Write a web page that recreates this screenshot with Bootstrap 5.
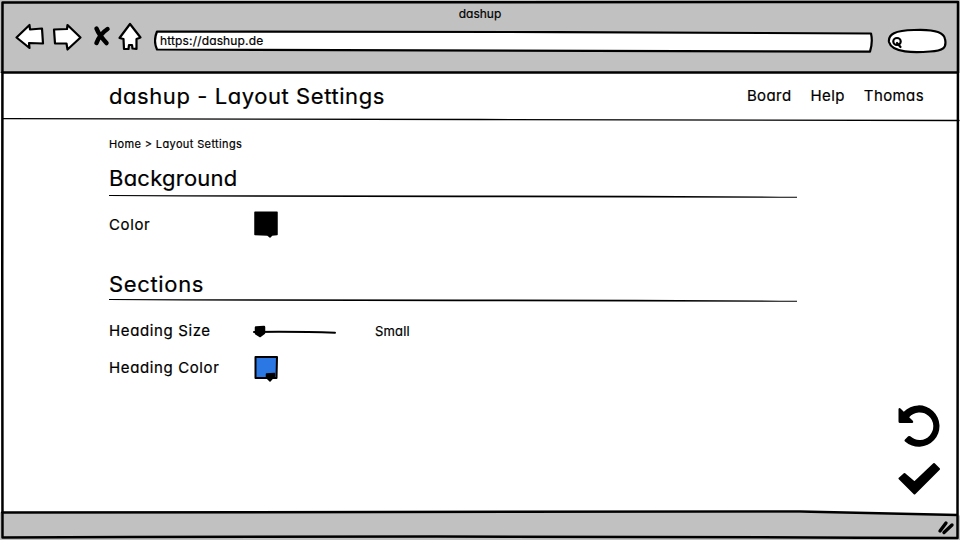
<!DOCTYPE html>
<html lang="en">
<head>
<meta charset="utf-8">
<meta name="viewport" content="width=device-width, initial-scale=1">
<title>dashup</title>
<link href="https://cdn.jsdelivr.net/npm/bootstrap@5.3.0/dist/css/bootstrap.min.css" rel="stylesheet">
<style>
body{font-family:Inter,"Open Sans",sans-serif;font-feature-settings:"cv11","ss03";color:#000;font-size:15px;line-height:1;-webkit-text-stroke:.2px #000}
svg{display:block;fill:none;stroke:#000;stroke-linecap:round;stroke-linejoin:round;flex:none}
.browser{width:960px;height:540px}
.chrome{height:73px;background:#c1c1c1}
.win-title{height:28px;font-size:12px;letter-spacing:0}
.tools{height:45px}
.address{width:720px;height:24px;margin-left:11px}
.address span{left:6px;top:7px;font-size:12px;letter-spacing:.15px}
.search{margin-left:12px}
.site-nav{height:45px;padding-left:109px;padding-right:36px}
.site-nav h1{font-size:22px;font-weight:400;letter-spacing:.57px;padding-top:2px}
.site-nav a{font-size:15px;letter-spacing:.4px;color:#000}
.menu{gap:19px;padding-bottom:1px}
.settings{width:688px;margin-left:109px}
.crumbs{height:44px;font-size:11px;letter-spacing:.37px}
.settings h2{font-size:22px;height:24px;font-weight:400;letter-spacing:.25px}
.settings h2.spaced{margin-top:29px;letter-spacing:.65px}
.field{height:37px}
.field label{width:143px;letter-spacing:.62px}
.value{margin-left:37px;padding-top:2px;font-size:13px;letter-spacing:.15px}
.actions{padding-right:20px;padding-bottom:17px;gap:13px}
.status{height:27px;background:#c1c1c1}
</style>
</head>
<body class="overflow-hidden">
<div class="browser position-relative d-flex flex-column bg-white">
  <header class="chrome">
    <div class="win-title d-flex align-items-center justify-content-center">dashup</div>
    <div class="tools d-flex">
      <svg width="143" height="36" viewBox="0 28 143 36" stroke-width="2.200" overflow="visible">
        <path fill="#fff" d="M16.5 37.5 29.5 25 30 29.500 42 28.500 43 43.500 29 43 29.500 48Z"/>
        <path fill="#fff" d="M54 29.500 67 29 67.500 25 80.500 37.500 67.500 49.500 66.500 43.500 55 43.500Z"/>
        <path d="M96.500 28.500Q99 35 106.500 43M107.500 29Q100 34 96.500 43" stroke-width="4.500"/>
        <path fill="#fff" d="M130 24 140.500 37.500 136.500 39 136.500 49 132.500 48.500 132 45 129 45 128.500 49 124 49 123.500 39 119.500 38Z"/>
      </svg>
      <div class="address position-relative">
        <svg width="720" height="30" viewBox="154 28 720 30" stroke-width="2.200"><path fill="#fff" d="M157 31.500 C350 31.500 650 32 871 33.500 Q873 42 870 51.700 Q500 50.500 157 49.500 Q153 41 157 31.500Z"/></svg>
        <span class="position-absolute">https://dashup.de</span>
      </div>
      <svg class="search" width="62" height="30" viewBox="886 28 62 30" stroke-width="2.200">
        <path fill="#fff" d="M889 42 C888 34 895 30.500 914 30 C935 29 944 32 945 39 C947 48 943 51 930 51.500 C915 53 892 53 889 42Z"/>
        <ellipse cx="897" cy="41.500" rx="3.700" ry="3.500"/><path d="M897 43 900.500 47"/>
      </svg>
    </div>
  </header>
  <nav class="site-nav navbar py-0 d-flex flex-nowrap justify-content-between">
    <h1 class="mb-0">dashup - Layout Settings</h1>
    <div class="d-flex menu">
      <a class="text-decoration-none" href="#">Board</a>
      <a class="text-decoration-none" href="#">Help</a>
      <a class="text-decoration-none" href="#">Thomas</a>
    </div>
  </nav>
  <svg width="960" height="4" viewBox="0 118 960 4" stroke-width="1.300"><path d="M3 118.700 Q300 120 480 119.500 T959 120.500"/></svg>
  <main class="d-flex flex-grow-1 justify-content-between">
    <div class="settings">
      <div class="crumbs d-flex align-items-center">Home &gt; Layout Settings</div>
      <h2 class="mb-0 d-flex align-items-center">Background</h2>
      <svg width="688" height="16" viewBox="0 190 688 16"><path fill="#000" stroke="none" d="M0 195 Q180 195.400 350 195.400 T688 196.800L688 197.800Q520 197.500 350 197.300T0 196Z"/></svg>
      <div class="field d-flex align-items-center">
        <label>Color</label>
        <svg width="28" height="30" viewBox="0 1 28 30"><path fill="#000" stroke-width="1.500" d="M3 3.300H25V25.500L20 26 18 28 15.500 26 3 25.500Z"/></svg>
      </div>
      <h2 class="mb-0 spaced d-flex align-items-center">Sections</h2>
      <svg width="688" height="16" viewBox="0 190 688 16"><path fill="#000" stroke="none" d="M0 193 Q180 193.400 350 193.400 T688 194.800L688 195.800Q520 195.500 350 195.300T0 194Z"/></svg>
      <div class="field d-flex align-items-center">
        <label>Heading Size</label>
        <svg width="86" height="16" viewBox="252 323 86 16" stroke-width="2"><path d="M254 332 Q300 331.500 335 332.800"/><path fill="#000" d="M256 327.500 264 327V333L260 336 256 333.500Z" stroke-width="2.500"/></svg>
        <span class="value">Small</span>
      </div>
      <div class="field d-flex align-items-center">
        <label>Heading Color</label>
        <svg width="28" height="30" viewBox="0 0 28 30" stroke-width="2"><path fill="#2b78e4" d="M3.500 4 25 4 24.500 25 3.500 25Z"/><path fill="#000" d="M14.500 21 22.500 20.500V23L18 28 14.500 24.500Z" stroke-width="1.500"/></svg>
      </div>
    </div>
    <div class="actions d-flex flex-column justify-content-end">
      <svg width="43" height="44" viewBox="897 405 43 44"><path stroke="none" fill="#000" d="M898.500 409Q899 407.500 900.500 408.500L903.800 411.800A20.700 20.700 0 1 1 905 441.500Q904 440.600 905 439.600L908.200 436.300Q909.200 435.500 910.300 436.300A13.700 13.700 0 1 0 909.200 417.300L912.800 420.800Q914 422.800 912 423H900Q898.500 423 898.500 421.500Z"/></svg>
      <svg width="43" height="34" viewBox="897 462 43 34"><path fill="#000" stroke-width="2" d="M899.500 478.500 904.500 474 914.500 482.500 934 464 939 469 914.500 493.500Z"/></svg>
    </div>
  </main>
  <footer class="status d-flex justify-content-end">
    <svg width="24" height="24" viewBox="936 513 24 24" stroke-width="3.400"><path d="M940 531 946 523M944 532.500 952 525"/></svg>
  </footer>
  <svg class="position-absolute top-0 start-0" width="960" height="540" stroke-width="2.500">
    <path stroke="none" fill="#fff" d="M500 511H960V515.500L840 512.500Z"/>
    <path d="M2.500 2.500 958 2 957.500 538 Q500 535.500 2.500 537.500 Q2 270 2.500 2.500ZM2 72.500 Q480 73.500 957.500 72.500M2 512.500 Q480 513.500 800 511.500 L957.500 515"/>
  </svg>
</div>
<script src="https://cdn.jsdelivr.net/npm/bootstrap@5.3.0/dist/js/bootstrap.bundle.min.js"></script>
</body>
</html>
